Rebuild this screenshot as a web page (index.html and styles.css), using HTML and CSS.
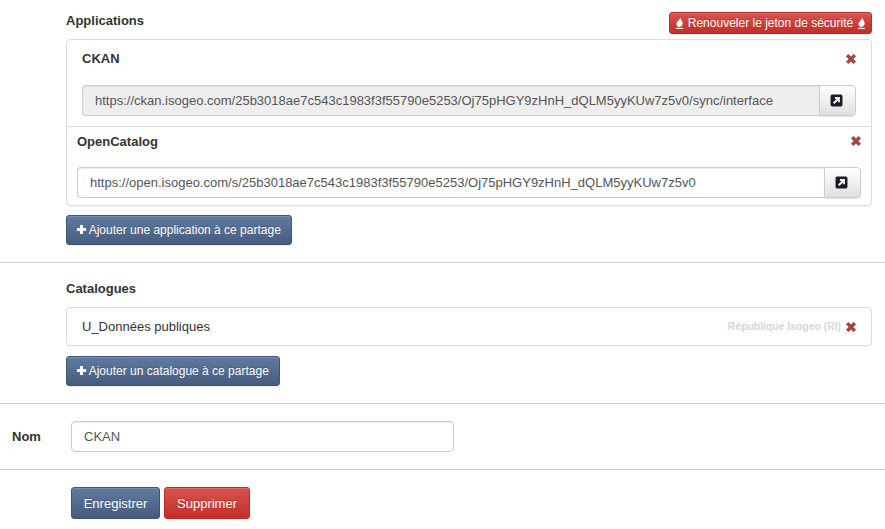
FILE: index.html
```html
<!DOCTYPE html>
<html lang="fr">
<head>
<meta charset="utf-8">
<title>Partage</title>
<link rel="stylesheet" href="styles.css">
</head>
<body>
<svg class="defs" width="0" height="0" aria-hidden="true">
  <symbol id="i-x" viewBox="0 0 10 10"><path d="M.8 2.800 2.800.8 5 3 7.200.8 9.200 2.800 7 5 9.200 7.200 7.200 9.200 5 7 2.800 9.200.8 7.200 3 5Z"/></symbol>
  <symbol id="i-ext" viewBox="0 0 12 12"><path fill-rule="evenodd" d="M2 .5h8A1.500 1.500 0 0 1 11.500 2v8A1.500 1.500 0 0 1 10 11.500H2A1.500 1.500 0 0 1 .5 10V2A1.500 1.500 0 0 1 2 .5ZM4.500 2.800v1.700h1.600L2.700 7.900 4.100 9.300 7.500 5.900V7.500H9.200V2.800Z"/></symbol>
  <symbol id="i-fire" viewBox="0 0 9 12"><path d="M5.400.2C5.700 2.400 1.600 4.100 1.500 7 1.400 8.700 2.500 9.700 4 9.900 5.800 10 7.700 8.700 7.700 6.600 7.700 4.200 5.500 3 5.400.2Z"/><rect x="1" y="10.800" width="7" height="1.100"/></symbol>
  <symbol id="i-plus" viewBox="0 0 10 10"><path d="M3.700.8h2.600v2.900h2.900v2.600H6.300v2.900H3.700V6.300H.8V3.700h2.900Z"/></symbol>
</svg>
<main class="page">
  <section class="block block-apps">
    <div class="block-head">
      <h2 class="block-title">Applications</h2>
      <button class="btn btn-red btn-small" type="button">
        <svg class="icon-fire"><use href="#i-fire"/></svg> Renouveler le jeton de sécurité <svg class="icon-fire"><use href="#i-fire"/></svg>
      </button>
    </div>
    <div class="panel">
      <div class="app app-first">
        <div class="app-head">
          <span class="app-name">CKAN</span>
          <svg class="icon-x"><use href="#i-x"/></svg>
        </div>
        <div class="url-group">
          <div class="url url-disabled">https://ckan.isogeo.com/25b3018ae7c543c1983f3f55790e5253/Oj75pHGY9zHnH_dQLM5yyKUw7z5v0/sync/interface</div>
          <button class="url-btn" type="button"><svg class="icon-ext"><use href="#i-ext"/></svg></button>
        </div>
      </div>
      <div class="app app-second">
        <div class="app-head">
          <span class="app-name">OpenCatalog</span>
          <svg class="icon-x"><use href="#i-x"/></svg>
        </div>
        <div class="url-group">
          <div class="url">https://open.isogeo.com/s/25b3018ae7c543c1983f3f55790e5253/Oj75pHGY9zHnH_dQLM5yyKUw7z5v0</div>
          <button class="url-btn" type="button"><svg class="icon-ext"><use href="#i-ext"/></svg></button>
        </div>
      </div>
    </div>
    <button class="btn btn-blue btn-add" type="button"><svg class="icon-plus"><use href="#i-plus"/></svg> Ajouter une application à ce partage</button>
  </section>

  <section class="block block-cats">
    <h2 class="block-title">Catalogues</h2>
    <div class="panel cat-row">
      <span class="cat-name">U_Données publiques</span>
      <span class="cat-owner">République Isogeo (RI)</span>
      <svg class="icon-x"><use href="#i-x"/></svg>
    </div>
    <button class="btn btn-blue btn-add btn-add-cat" type="button"><svg class="icon-plus"><use href="#i-plus"/></svg> Ajouter un catalogue à ce partage</button>
  </section>

  <section class="block block-name">
    <label class="name-label" for="nom">Nom</label>
    <input class="name-input" id="nom" type="text" value="CKAN">
  </section>

  <section class="actions">
    <button class="btn btn-blue btn-main btn-save" type="button">Enregistrer</button>
    <button class="btn btn-red btn-main btn-delete" type="button">Supprimer</button>
  </section>
</main>
</body>
</html>
```
FILE: styles.css
```css
* { box-sizing: border-box; }
html, body { margin: 0; padding: 0; background: #fff; }
body {
  font-family: "Liberation Sans", Arial, sans-serif;
  font-size: 13px;
  color: #333;
  overflow: hidden;
}
.defs { position: absolute; }
.page { width: 885px; }

.block { border-bottom: 1px solid #ccc; }
.block-apps { height: 263px; padding: 12px 13px 0 66px; }
.block-cats { height: 141px; padding: 17px 13px 0 66px; }
.block-name { height: 66px; padding: 17px 0 0 12px; display: flex; align-items: flex-start; }

.block-head { display: flex; justify-content: space-between; height: 27px; }
.block-title {
  margin: 0;
  font-size: 13px;
  line-height: 17px;
  font-weight: bold;
  color: #333;
}
.block-cats .block-title { height: 27px; }

.panel {
  border: 1px solid #ddd;
  border-radius: 4px;
  background: #fff;
  box-shadow: 0 1px 1px rgba(0,0,0,.05);
}
.app-first { padding: 0 15px; height: 87px; border-bottom: 1px solid #ddd; }
.app-second { padding: 0 10px; height: 78px; }
.app-head {
  display: flex;
  justify-content: space-between;
  align-items: center;
}
.app-first .app-head { height: 37px; margin-bottom: 8px; }
.app-second .app-head { height: 28px; margin-bottom: 12px; }
.app-name { font-size: 13px; font-weight: bold; }
.icon-x { width: 12px; height: 12px; fill: #a94442; flex: none; margin-right: -1px; }

.url-group { display: flex; height: 31px; }
.url {
  flex: 1;
  height: 31px;
  padding: 0 12px;
  line-height: 29px;
  font-size: 13px;
  color: #555;
  border: 1px solid #ccc;
  border-right: 0;
  border-radius: 4px 0 0 4px;
  box-shadow: inset 0 1px 1px rgba(0,0,0,.075);
  white-space: nowrap;
}
.url-disabled { background: #eee; }
.url-btn {
  width: 37px;
  height: 31px;
  padding: 0 2px 0 0;
  display: flex;
  align-items: center;
  justify-content: center;
  border: 1px solid #ccc;
  border-radius: 0 4px 4px 0;
  background: linear-gradient(#fff, #e0e0e0);
  box-shadow: 0 1px 1px rgba(0,0,0,.1);
}
.icon-ext { width: 13px; height: 13px; fill: #1a1a2a; display: block; }

.btn {
  font-family: inherit;
  font-weight: normal;
  font-size: 12px;
  color: #fff;
  border-radius: 3px;
  padding: 0;
  text-shadow: 0 -1px 0 rgba(0,0,0,.2);
  box-shadow: inset 0 1px 0 rgba(255,255,255,.15), 0 1px 1px rgba(0,0,0,.075);
  white-space: nowrap;
}
.btn-blue {
  background: linear-gradient(#5f7ba2, #465c7e);
  border: 1px solid #3f5577;
}
.btn-red {
  background: linear-gradient(#d9534f, #c12e2a);
  border: 1px solid #b92c28;
}
.btn-small { width: 203px; height: 22px; }
.btn-add { display: block; height: 30px; padding: 0 10px 0 9px; margin-top: 9px; }
.btn-add-cat { margin-top: 10px; }
.btn-main { height: 32px; font-size: 13px; padding: 0; }
.btn-save { width: 89px; }
.btn-delete { width: 86px; }
.icon-plus { width: 11px; height: 11px; fill: #fff; vertical-align: -1px; margin-right: -1px; }
.icon-fire { width: 9px; height: 12px; fill: #fff; vertical-align: -2px; }

.cat-row {
  height: 39px;
  display: flex;
  align-items: center;
  padding: 0 15px;
}
.cat-name { flex: 1; font-size: 13px; }
.cat-owner { font-size: 10.400px; font-weight: bold; color: #d5d5e0; margin-right: 4px; }

.name-label { width: 59px; font-size: 13px; font-weight: bold; line-height: 31px; }
.name-input {
  width: 383px;
  height: 31px;
  padding: 0 12px;
  font-family: inherit;
  font-size: 13px;
  color: #555;
  border: 1px solid #ccc;
  border-radius: 4px;
  box-shadow: inset 0 1px 1px rgba(0,0,0,.075);
}
.actions { display: flex; gap: 4px; padding: 17px 0 0 71px; }
```
